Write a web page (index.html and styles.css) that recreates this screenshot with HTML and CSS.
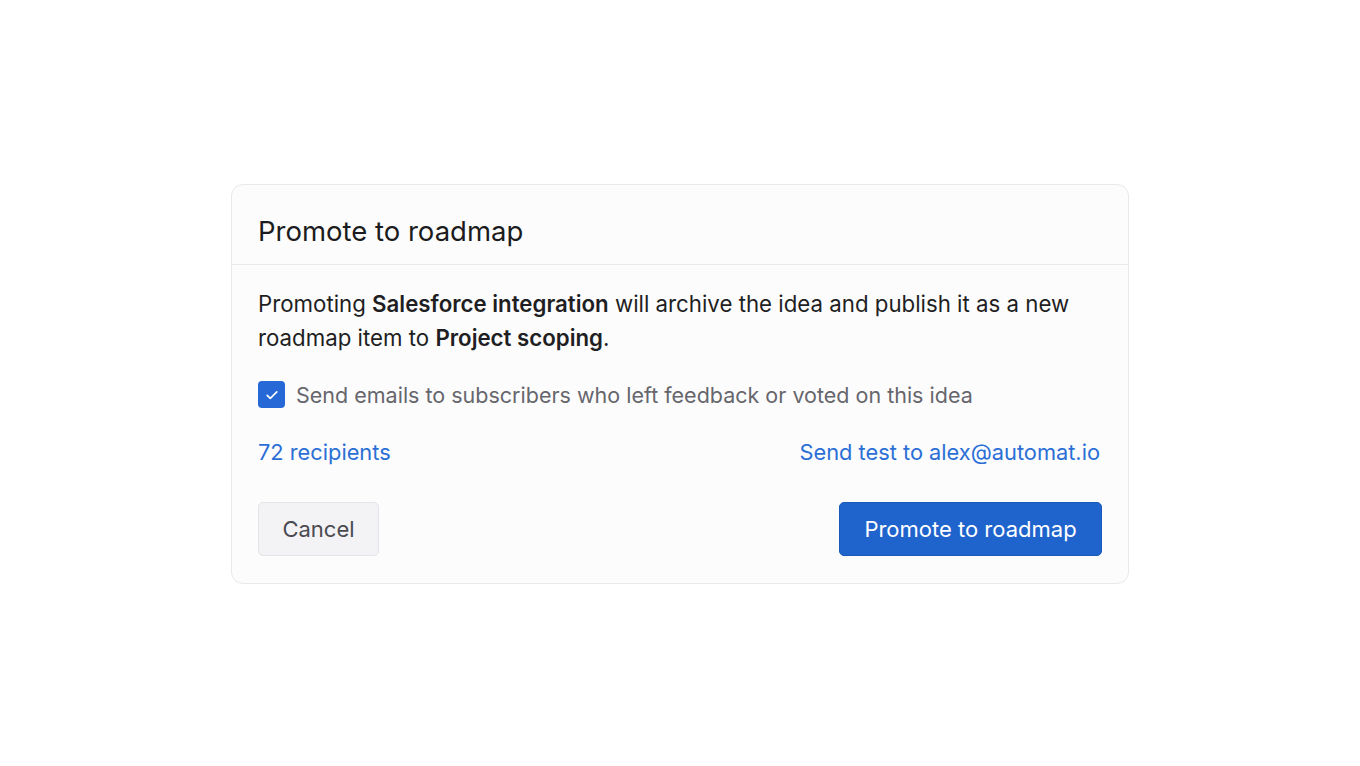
FILE: index.html
```html
<!DOCTYPE html>
<html lang="en">
<head>
<meta charset="utf-8">
<title>Promote to roadmap</title>
<link rel="stylesheet" href="styles.css">
</head>
<body>
<div class="page">
  <div class="dialog">
    <div class="dialog-header">
      <h1 class="title">Promote to roadmap</h1>
    </div>
    <div class="dialog-body">
      <p class="desc">Promoting <strong>Salesforce integration</strong> will archive the idea and publish it as a new roadmap item to <strong>Project scoping</strong>.</p>
      <label class="check-row">
        <span class="checkbox">
          <svg width="16" height="16" viewBox="0 0 16 16" fill="none"><path d="M3.2 8.3l3.1 3 6.5-6.4" stroke="#fff" stroke-width="1.7" stroke-linecap="round" stroke-linejoin="round"/></svg>
        </span>
        <span class="check-label">Send emails to subscribers who left feedback or voted on this idea</span>
      </label>
      <div class="links">
        <a class="link" href="#">72 recipients</a>
        <a class="link" href="#">Send test to alex@automat.io</a>
      </div>
      <div class="actions">
        <button class="btn btn-secondary">Cancel</button>
        <button class="btn btn-primary">Promote to roadmap</button>
      </div>
    </div>
  </div>
</div>
</body>
</html>
```
FILE: styles.css
```css
* { box-sizing: border-box; }
html, body { margin: 0; padding: 0; background: #ffffff; }
body { font-family: Inter, "Noto Sans", sans-serif; color: #1f1f23; }
.page {
  width: 1360px;
  height: 766px;
  display: flex;
  align-items: center;
  justify-content: center;
}
.dialog {
  width: 898px;
  height: 400px;
  margin-top: 2px;
  background: #fcfcfd;
  border: 1px solid #e9e9ed;
  border-radius: 12px;
  display: flex;
  flex-direction: column;
}
.dialog-header {
  height: 80px;
  padding: 30px 26px 0 26px;
  border-bottom: 1px solid #e9e9ed;
}
.title {
  margin: 0;
  font-size: 27.5px;
  font-weight: 400;
  line-height: 32px;
  color: #1c1c20;
}
.dialog-body {
  padding: 22px 26px 0 26px;
  display: flex;
  flex-direction: column;
}
.desc {
  margin: 0;
  font-size: 22.25px;
  line-height: 34px;
  color: #1f1f23;
}
.desc strong { font-weight: 600; }
.check-row {
  margin-top: 26px;
  display: flex;
  align-items: center;
  gap: 11px;
  height: 27px;
}
.checkbox {
  width: 27px;
  height: 27px;
  border-radius: 4px;
  background: #2668d6;
  display: flex;
  align-items: center;
  justify-content: center;
  flex: none;
}
.check-label {
  font-size: 21.5px;
  line-height: 28px;
  color: #66666c;
}
.links {
  margin-top: 30px;
  display: flex;
  justify-content: space-between;
  height: 28px;
  align-items: center;
  padding-right: 2px;
}
.link {
  font-size: 21.8px;
  line-height: 28px;
  color: #2b6fd6;
  text-decoration: none;
}
.actions {
  margin-top: 36px;
  display: flex;
  justify-content: space-between;
}
.btn {
  height: 54px;
  font-family: inherit;
  font-size: 22px;
  border-radius: 5px;
  padding: 0;
  cursor: pointer;
}
.btn-secondary {
  width: 121px;
  background: #f3f2f5;
  border: 1px solid #e4e3e8;
  color: #4a4a50;
}
.btn-primary {
  width: 263px;
  background: #1f63cc;
  border: 1px solid #1b59b9;
  color: #ffffff;
}
```
